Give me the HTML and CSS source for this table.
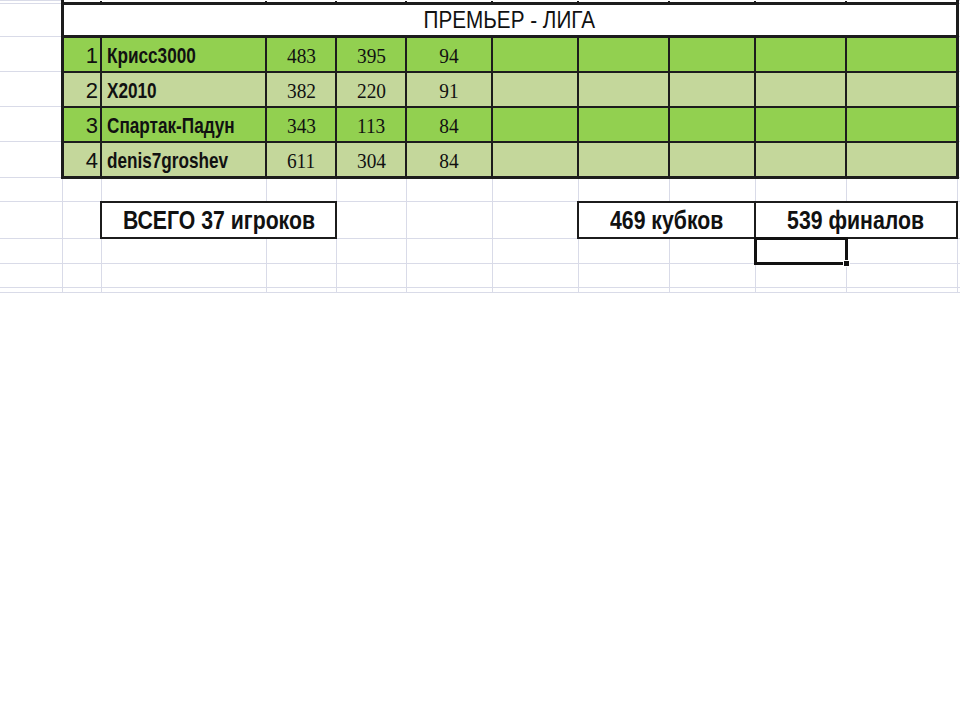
FILE: index.html
```html
<!DOCTYPE html>
<html lang="ru">
<head>
    <meta charset="UTF-8">
    <title>Премьер - лига</title>
    <link rel="stylesheet" href="styles.css">
</head>
<body>

<table class="sheet">
    <colgroup>
        <col style="width:62px">
        <col style="width:39px">
        <col style="width:165px">
        <col style="width:70px">
        <col style="width:70px">
        <col style="width:86px">
        <col style="width:86px">
        <col style="width:91px">
        <col style="width:86px">
        <col style="width:91px">
        <col style="width:111px">
        <col style="width:3px">
    </colgroup>
    <tr class="row-top">
        <td></td>
        <td class="box left"></td><td class="box"></td><td class="box"></td><td class="box"></td>
        <td class="box"></td><td class="box"></td><td class="box"></td><td class="box"></td>
        <td class="box"></td><td class="box right"></td>
        <td></td>
    </tr>
    <tr class="row-title">
        <td></td>
        <td colspan="10" class="title"><span class="squeeze">ПРЕМЬЕР - ЛИГА</span></td>
        <td></td>
    </tr>
    <tr class="row-data bright">
        <td></td>
        <td class="box left num">1</td>
        <td class="box name"><span class="squeeze">Крисс3000</span></td>
        <td class="box val"><span class="squeeze">483</span></td>
        <td class="box val"><span class="squeeze">395</span></td>
        <td class="box val"><span class="squeeze">94</span></td>
        <td class="box"></td><td class="box"></td><td class="box"></td><td class="box"></td>
        <td class="box right"></td>
        <td></td>
    </tr>
    <tr class="row-data pale">
        <td></td>
        <td class="box left num">2</td>
        <td class="box name"><span class="squeeze">X2010</span></td>
        <td class="box val"><span class="squeeze">382</span></td>
        <td class="box val"><span class="squeeze">220</span></td>
        <td class="box val"><span class="squeeze">91</span></td>
        <td class="box"></td><td class="box"></td><td class="box"></td><td class="box"></td>
        <td class="box right"></td>
        <td></td>
    </tr>
    <tr class="row-data bright">
        <td></td>
        <td class="box left num">3</td>
        <td class="box name"><span class="squeeze">Спартак-Падун</span></td>
        <td class="box val"><span class="squeeze">343</span></td>
        <td class="box val"><span class="squeeze">113</span></td>
        <td class="box val"><span class="squeeze">84</span></td>
        <td class="box"></td><td class="box"></td><td class="box"></td><td class="box"></td>
        <td class="box right"></td>
        <td></td>
    </tr>
    <tr class="row-data pale last">
        <td></td>
        <td class="box left num">4</td>
        <td class="box name"><span class="squeeze">denis7groshev</span></td>
        <td class="box val"><span class="squeeze">611</span></td>
        <td class="box val"><span class="squeeze">304</span></td>
        <td class="box val"><span class="squeeze">84</span></td>
        <td class="box"></td><td class="box"></td><td class="box"></td><td class="box"></td>
        <td class="box right"></td>
        <td></td>
    </tr>
    <tr class="row-gap">
        <td></td><td></td><td></td><td></td><td></td><td></td>
        <td></td><td></td><td></td><td></td><td></td><td></td>
    </tr>
    <tr class="row-total">
        <td></td>
        <td></td>
        <td colspan="2" class="total"><span class="squeeze">ВСЕГО 37 игроков</span></td>
        <td></td><td></td><td></td>
        <td colspan="2" class="total"><span class="squeeze">469 кубков</span></td>
        <td colspan="2" class="total"><span class="squeeze">539 финалов</span></td>
        <td></td>
    </tr>
    <tr class="row-small">
        <td></td><td></td><td></td><td></td><td></td><td></td>
        <td></td><td></td><td></td>
        <td class="selected"></td>
        <td></td><td></td>
    </tr>
    <tr class="row-small">
        <td></td><td></td><td></td><td></td><td></td><td></td>
        <td></td><td></td><td></td><td></td><td></td><td></td>
    </tr>
    <tr class="row-end">
        <td></td><td></td><td></td><td></td><td></td><td></td>
        <td></td><td></td><td></td><td></td><td></td><td></td>
    </tr>
</table>

</body>
</html>
```

FILE: styles.css
```css
body {
    margin: 0;
    background-color: white;
    font-family: "Liberation Sans", Arial, sans-serif;
}
table.sheet {
    table-layout: fixed;
    border-collapse: collapse;
    width: 960px;
}
table.sheet td {
    border: 1px solid #d9dbe8;
    padding: 0;
    line-height: 20px;
    overflow: hidden;
    white-space: nowrap;
    color: #111;
}
table.sheet td:first-child {
    border-left: none;
}
table.sheet td:last-child {
    border-right: none;
}
.squeeze {
    display: inline-block;
    transform: scaleX(0.8);
}
.row-top td {
    height: 1px;
    border-top: none;
}
.row-title td {
    height: 30px;
}
.row-data td {
    height: 30px;
}
.row-gap td {
    height: 22px;
}
.row-total td {
    height: 34px;
}
.row-small td {
    height: 22px;
}
.row-end td {
    height: 4px;
    border-bottom-style: hidden;
}
.box {
    border: 2px solid #1c1c1c !important;
}
.row-top .box {
    border-top: none !important;
    border-bottom-width: 3px !important;
}
.left {
    border-left-width: 3px !important;
}
.right {
    border-right-width: 3px !important;
}
.last .box {
    border-bottom-width: 3px !important;
}
.title {
    border: 3px solid #1c1c1c !important;
    background-color: white;
    text-align: center;
    font-size: 23px;
}
.title .squeeze {
    transform: scaleX(0.9);
}
.bright td.box {
    background-color: #92d050;
}
.pale td.box {
    background-color: #c4d79b;
}
.num {
    text-align: right;
    font-size: 22px;
    padding-right: 2px !important;
    padding-top: 3px !important;
}
.name {
    font-weight: bold;
    font-size: 22px;
    padding-left: 5px !important;
    padding-top: 3px !important;
}
.name .squeeze {
    transform: scaleX(0.78);
    transform-origin: left center;
}
.val {
    text-align: center;
    font-family: "Liberation Serif", "Times New Roman", serif;
    font-size: 22px;
    padding-top: 3px !important;
}
.val .squeeze {
    transform: scaleX(0.88);
}
.total {
    border: 2px solid #1c1c1c !important;
    text-align: center;
    font-weight: bold;
    font-size: 25px;
}
.total .squeeze {
    transform: scaleX(0.85);
}
.selected {
    position: relative;
    border: 3px solid #111 !important;
    overflow: visible !important;
}
.selected::after {
    content: "";
    position: absolute;
    right: -5px;
    bottom: -5px;
    width: 5px;
    height: 5px;
    background-color: #111;
    border: 1px solid white;
}
```
